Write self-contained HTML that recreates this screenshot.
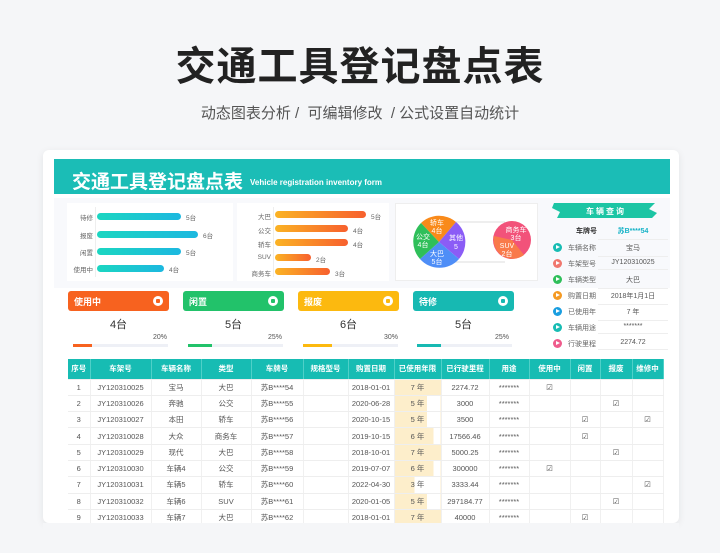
<!DOCTYPE html>
<html><head><meta charset="utf-8"><style>
*{margin:0;padding:0;box-sizing:border-box}
body{width:720px;height:551px;background:#f5f6f8;font-family:"Liberation Sans","Noto Sans CJK SC",sans-serif;position:relative;overflow:hidden;color:#333}
.a{position:absolute}
.t{font-size:10px;color:#555}
table{border-collapse:collapse;position:absolute;left:68px;top:359px;table-layout:fixed}
td,th{font-size:7.5px;text-align:center;color:#555;font-weight:normal;height:16.3px;border-bottom:1px solid #eee;border-right:1px solid #f0f0f0;white-space:nowrap;padding:0}
th{background:#17bcb3;color:#fff;font-weight:bold;height:20px;border-right:1px solid #4fd0c8}
td.y{background:linear-gradient(90deg,#fdeecb 0,#fdeecb var(--w),#fff var(--w))}
.lbl{position:absolute;font-size:6.5px;color:#666;text-align:right}
.bar{position:absolute;height:7px;border-radius:4px}
.cy{background:linear-gradient(90deg,#1bd6c1,#1cb8e0)}
.or{background:linear-gradient(90deg,#fbb324,#f7602e)}
.val{position:absolute;font-size:6.5px;color:#666}
.card{position:absolute;top:291px;width:101px;height:20px;border-radius:3px;color:#fff;font-size:9px;font-weight:bold;padding:4px 6px}
.card i{position:absolute;right:6px;top:5px;width:10px;height:10px;border-radius:50%;background:#fff}
.card i:after{content:"";position:absolute;left:3px;top:3px;width:4px;height:4px;background:currentColor;border-radius:1px}
.num{position:absolute;top:316px;width:101px;text-align:center;font-size:11px;color:#333}
.pct{position:absolute;top:334px;font-size:7px;color:#555}
.pb{position:absolute;top:344px;height:3px;width:95px;background:#eef0f6}
.q{position:absolute;left:568px;font-size:7px;color:#666}
.qv{position:absolute;left:598px;width:70px;text-align:center;font-size:7px;color:#555;border-bottom:1px solid #eee;padding-bottom:3px}
.ic{position:absolute;left:553px;width:9px;height:9px;border-radius:50%}
.ic:after{content:"";position:absolute;left:3px;top:2px;border-left:4px solid #fff;border-top:2.5px solid transparent;border-bottom:2.5px solid transparent}
</style></head><body>
<div class="a" style="left:0;top:34px;width:720px;text-align:center;font-size:40px;font-weight:bold;color:#222;letter-spacing:1px">交通工具登记盘点表</div>
<div class="a" style="left:0;top:102px;width:720px;text-align:center;font-size:15px;color:#555">动态图表分析 /&nbsp; 可编辑修改 &nbsp;/ 公式设置自动统计</div>

<div class="a" style="left:43px;top:150px;width:636px;height:373px;background:#fff;border-radius:6px;box-shadow:0 2px 8px rgba(0,0,0,.08)"></div>
<div class="a" style="left:54px;top:159px;width:616px;height:35px;background:#1bbdb6"></div>
<div class="a" style="left:72px;top:167px;font-size:19px;font-weight:bold;color:#fff">交通工具登记盘点表</div>
<div class="a" style="left:250px;top:178px;font-size:8px;font-weight:bold;color:#fff">Vehicle registration inventory form</div>
<div class="a" style="left:54px;top:198px;width:616px;height:90px;background:#f8f9fc"></div>
<div class="a" style="left:67px;top:203px;width:166px;height:78px;background:#fff"></div>
<div class="a" style="left:237px;top:203px;width:152px;height:78px;background:#fff"></div>
<div class="a" style="left:395px;top:203px;width:143px;height:78px;background:#fff;border:1px solid #eee"></div>

<div class="lbl" style="left:60px;width:33px;top:212px">待修</div><div class="bar cy" style="left:97px;top:213px;width:84px"></div><div class="val" style="left:186px;top:212px">5台</div>
<div class="lbl" style="left:60px;width:33px;top:230px">报废</div><div class="bar cy" style="left:97px;top:231px;width:101px"></div><div class="val" style="left:203px;top:230px">6台</div>
<div class="lbl" style="left:60px;width:33px;top:247px">闲置</div><div class="bar cy" style="left:97px;top:248px;width:84px"></div><div class="val" style="left:186px;top:247px">5台</div>
<div class="lbl" style="left:60px;width:33px;top:264px">使用中</div><div class="bar cy" style="left:97px;top:265px;width:67px"></div><div class="val" style="left:169px;top:264px">4台</div>
<div class="a" style="left:95px;top:207px;width:1px;height:70px;background:#eee"></div>

<div class="lbl" style="left:240px;width:31px;top:211px">大巴</div><div class="bar or" style="left:275px;top:211px;width:91px"></div><div class="val" style="left:371px;top:211px">5台</div>
<div class="lbl" style="left:240px;width:31px;top:225px">公交</div><div class="bar or" style="left:275px;top:225px;width:73px"></div><div class="val" style="left:353px;top:225px">4台</div>
<div class="lbl" style="left:240px;width:31px;top:239px">轿车</div><div class="bar or" style="left:275px;top:239px;width:73px"></div><div class="val" style="left:353px;top:239px">4台</div>
<div class="lbl" style="left:240px;width:31px;top:254px">SUV</div><div class="bar or" style="left:275px;top:254px;width:36px"></div><div class="val" style="left:316px;top:254px">2台</div>
<div class="lbl" style="left:240px;width:31px;top:268px">商务车</div><div class="bar or" style="left:275px;top:268px;width:55px"></div><div class="val" style="left:335px;top:268px">3台</div>
<div class="a" style="left:273px;top:207px;width:1px;height:70px;background:#eee"></div>

<svg class="a" style="left:395px;top:203px" width="143" height="78" viewBox="395 203 143 78">
<line x1="455" y1="222" x2="505" y2="222" stroke="#ddd"/><line x1="455" y1="262" x2="505" y2="262" stroke="#ddd"/>
<path d="M439,242 L421,223 A26,26 0 0 1 456,222 Z" fill="#f98a1a"/>
<path d="M439,242 L456,222 A26,26 0 0 1 459,259 Z" fill="#8b5cf6"/>
<path d="M439,242 L459,259 A26,26 0 0 1 420,259 Z" fill="#4f8ef7"/>
<path d="M439,242 L420,259 A26,26 0 0 1 421,223 Z" fill="#2fbf5a"/>
<circle cx="512" cy="240" r="19" fill="#f2527a"/>
<path d="M512,240 L494,236 A19,19 0 0 0 524,255 Z" fill="#f97a4a"/>
<g font-size="7" fill="#fff" text-anchor="middle" font-family="Liberation Sans,Noto Sans CJK SC,sans-serif">
<text x="437" y="225">轿车</text><text x="437" y="233">4台</text>
<text x="423" y="239">公交</text><text x="423" y="247">4台</text>
<text x="456" y="240">其他</text><text x="456" y="249">5</text>
<text x="437" y="256">大巴</text><text x="437" y="264">5台</text>
<text x="516" y="232">商务车</text><text x="516" y="240">3台</text>
<text x="507" y="248">SUV</text><text x="507" y="256">2台</text></g>
</svg>

<svg class="a" style="left:551px;top:201px" width="110" height="20"><path d="M3,2 L104,2 L98,8 L106,12 L101,17 L6,17 L9,11 L1,7 Z" fill="#1cc5a4"/><text x="55" y="13" font-size="8" font-weight="bold" fill="#fff" text-anchor="middle" letter-spacing="2" font-family="Liberation Sans,Noto Sans CJK SC,sans-serif">车辆查询</text></svg>
<div class="a" style="left:576px;top:226px;font-size:7px;font-weight:bold;color:#333">车牌号</div>
<div class="qv" style="top:226px;color:#17b3c7;font-weight:bold">苏B****54</div>
<div class="ic" style="top:243px;background:#17bcb3"></div><div class="q" style="top:243px">车辆名称</div><div class="qv" style="top:243px">宝马</div>
<div class="ic" style="top:259px;background:#f0776e"></div><div class="q" style="top:259px">车架型号</div><div class="qv" style="top:259px">JY120310025</div>
<div class="ic" style="top:275px;background:#2fbf5a"></div><div class="q" style="top:275px">车辆类型</div><div class="qv" style="top:275px">大巴</div>
<div class="ic" style="top:291px;background:#f59a23"></div><div class="q" style="top:291px">购置日期</div><div class="qv" style="top:291px">2018年1月1日</div>
<div class="ic" style="top:307px;background:#1a9ee0"></div><div class="q" style="top:307px">已使用年</div><div class="qv" style="top:307px">7 年</div>
<div class="ic" style="top:323px;background:#17bcb3"></div><div class="q" style="top:323px">车辆用途</div><div class="qv" style="top:323px">*******</div>
<div class="ic" style="top:339px;background:#ef5b8c"></div><div class="q" style="top:339px">行驶里程</div><div class="qv" style="top:339px">2274.72</div>

<div class="card" style="left:68px;background:#f7621f;color:#f7621f"><span style="color:#fff">使用中</span><i></i></div>
<div class="card" style="left:183px;background:#22c26a;color:#22c26a"><span style="color:#fff">闲置</span><i></i></div>
<div class="card" style="left:298px;background:#fcb90f;color:#fcb90f"><span style="color:#fff">报废</span><i></i></div>
<div class="card" style="left:413px;background:#17b9b2;color:#17b9b2"><span style="color:#fff">待修</span><i></i></div>
<div class="num" style="left:68px">4台</div><div class="num" style="left:183px">5台</div><div class="num" style="left:298px">6台</div><div class="num" style="left:413px">5台</div>
<div class="pct" style="left:153px">20%</div><div class="pct" style="left:268px">25%</div><div class="pct" style="left:384px">30%</div><div class="pct" style="left:495px">25%</div>
<div class="pb" style="left:73px"><div style="width:19px;height:3px;background:#f7621f"></div></div>
<div class="pb" style="left:188px"><div style="width:24px;height:3px;background:#22c26a"></div></div>
<div class="pb" style="left:303px"><div style="width:29px;height:3px;background:#fcb90f"></div></div>
<div class="pb" style="left:417px"><div style="width:24px;height:3px;background:#17b9b2"></div></div>

<table>
<colgroup><col style="width:22px"><col style="width:61px"><col style="width:50px"><col style="width:50px"><col style="width:52px"><col style="width:45px"><col style="width:46px"><col style="width:47px"><col style="width:48px"><col style="width:40px"><col style="width:41px"><col style="width:30px"><col style="width:32px"><col style="width:31px"></colgroup>
<tr><th>序号</th><th>车架号</th><th>车辆名称</th><th>类型</th><th>车牌号</th><th>规格型号</th><th>购置日期</th><th>已使用年限</th><th>已行驶里程</th><th>用途</th><th>使用中</th><th>闲置</th><th>报废</th><th>维修中</th></tr>
<tr><td>1</td><td>JY120310025</td><td>宝马</td><td>大巴</td><td>苏B****54</td><td></td><td>2018-01-01</td><td class="y" style="--w:100%">7 年</td><td>2274.72</td><td>*******</td><td>☑</td><td></td><td></td><td></td></tr>
<tr><td>2</td><td>JY120310026</td><td>奔驰</td><td>公交</td><td>苏B****55</td><td></td><td>2020-06-28</td><td class="y" style="--w:71%">5 年</td><td>3000</td><td>*******</td><td></td><td></td><td>☑</td><td></td></tr>
<tr><td>3</td><td>JY120310027</td><td>本田</td><td>轿车</td><td>苏B****56</td><td></td><td>2020-10-15</td><td class="y" style="--w:71%">5 年</td><td>3500</td><td>*******</td><td></td><td>☑</td><td></td><td>☑</td></tr>
<tr><td>4</td><td>JY120310028</td><td>大众</td><td>商务车</td><td>苏B****57</td><td></td><td>2019-10-15</td><td class="y" style="--w:85%">6 年</td><td>17566.46</td><td>*******</td><td></td><td>☑</td><td></td><td></td></tr>
<tr><td>5</td><td>JY120310029</td><td>现代</td><td>大巴</td><td>苏B****58</td><td></td><td>2018-10-01</td><td class="y" style="--w:100%">7 年</td><td>5000.25</td><td>*******</td><td></td><td></td><td>☑</td><td></td></tr>
<tr><td>6</td><td>JY120310030</td><td>车辆4</td><td>公交</td><td>苏B****59</td><td></td><td>2019-07-07</td><td class="y" style="--w:85%">6 年</td><td>300000</td><td>*******</td><td>☑</td><td></td><td></td><td></td></tr>
<tr><td>7</td><td>JY120310031</td><td>车辆5</td><td>轿车</td><td>苏B****60</td><td></td><td>2022-04-30</td><td class="y" style="--w:43%">3 年</td><td>3333.44</td><td>*******</td><td></td><td></td><td></td><td>☑</td></tr>
<tr><td>8</td><td>JY120310032</td><td>车辆6</td><td>SUV</td><td>苏B****61</td><td></td><td>2020-01-05</td><td class="y" style="--w:71%">5 年</td><td>297184.77</td><td>*******</td><td></td><td></td><td>☑</td><td></td></tr>
<tr><td>9</td><td>JY120310033</td><td>车辆7</td><td>大巴</td><td>苏B****62</td><td></td><td>2018-01-01</td><td class="y" style="--w:100%">7 年</td><td>40000</td><td>*******</td><td></td><td>☑</td><td></td><td></td></tr>
</table>
<div class="a" style="left:43px;top:523px;width:636px;height:30px;background:#f5f6f8"></div>
</body></html>
